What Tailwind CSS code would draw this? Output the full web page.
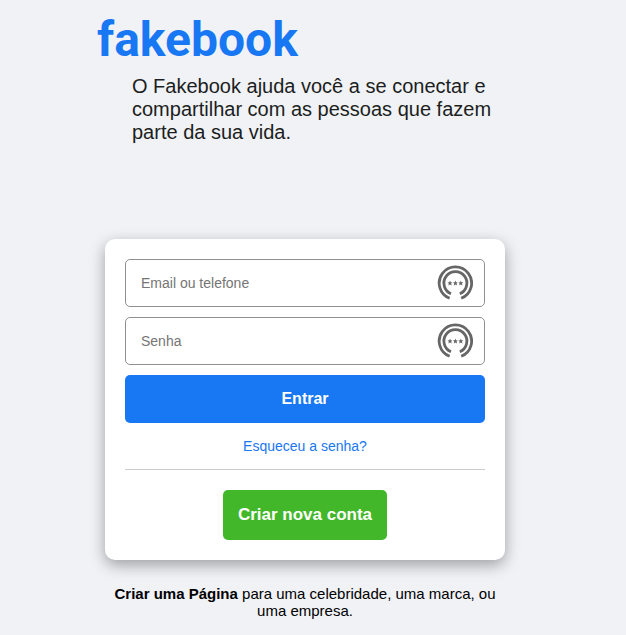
<!DOCTYPE html>
<html lang="pt-BR">
<head>
<meta charset="utf-8">
<meta name="viewport" content="width=device-width, initial-scale=1">
<title>Fakebook</title>
<script src="https://cdn.jsdelivr.net/npm/@tailwindcss/browser@4"></script>
</head>
<body class="min-h-screen bg-[#f0f2f6] pr-4 font-['Liberation_Sans',Arial,sans-serif] text-black">
<svg class="hidden" aria-hidden="true">
  <symbol id="key-ring" viewBox="0 0 36 36">
    <g fill="none" stroke="#666" stroke-width="2.8">
      <path d="M12.6 33.3A16.2 16.2 0 1 1 24.2 33.3"/>
      <path d="M14 28.8A11.5 11.5 0 1 1 22.8 28.8"/>
    </g>
    <g fill="#666">
      <path id="star" d="M13 15.6l.7 1.6 1.8.2-1.3 1.2.4 1.8-1.6-.9-1.6.9.4-1.8-1.3-1.2 1.8-.2z"/>
      <use href="#star" x="5.4"/>
      <use href="#star" x="10.8"/>
    </g>
  </symbol>
</svg>
<main class="mx-auto max-w-[416px]">
  <header class="pt-2">
    <h1 class="h-14 font-[Roboto,sans-serif] text-[48px] leading-[64px] font-bold text-[#1877f2]">fakebook</h1>
    <p class="mt-[11px] pl-[35px] text-[20px] leading-[23px] text-[#1c1e21]">O Fakebook ajuda você a se conectar e compartilhar com as pessoas que fazem parte da sua vida.</p>
  </header>
  <form class="mx-2 mt-[95px] flex flex-col rounded-[10px] bg-white p-5 shadow-[0_5px_15px_rgba(0,0,0,0.35)]">
    <div class="relative mb-2.5">
      <input type="text" aria-label="Email ou telefone" placeholder="Email ou telefone" class="block h-12 w-full rounded-[5px] border border-[#909090] bg-white px-[15px] text-[14px] placeholder:text-[#757575]">
      <svg class="absolute top-1.5 right-3 size-9" aria-hidden="true"><use href="#key-ring"/></svg>
    </div>
    <div class="relative mb-2.5">
      <input type="password" aria-label="Senha" placeholder="Senha" class="block h-12 w-full rounded-[5px] border border-[#909090] bg-white px-[15px] text-[14px] placeholder:text-[#757575]">
      <svg class="absolute top-1.5 right-3 size-9" aria-hidden="true"><use href="#key-ring"/></svg>
    </div>
    <button type="submit" class="h-12 rounded-[5px] bg-[#1877f2] text-[16px] font-bold text-white">Entrar</button>
    <a href="#" class="mt-[15px] self-center text-[14px] leading-4 text-[#1877f2]">Esqueceu a senha?</a>
    <hr class="mt-[15px] mb-5 border-[#ccc]">
    <button type="button" class="h-[50px] self-center rounded-[5px] bg-[#42b72a] px-[15px] text-[17px] font-bold text-white">Criar nova conta</button>
  </form>
  <p class="mx-2 mt-[25px] text-center text-[15px] leading-[17px]"><a href="#" class="font-bold">Criar uma Página</a> para uma celebridade, uma marca, ou uma empresa.</p>
</main>
</body>
</html>
